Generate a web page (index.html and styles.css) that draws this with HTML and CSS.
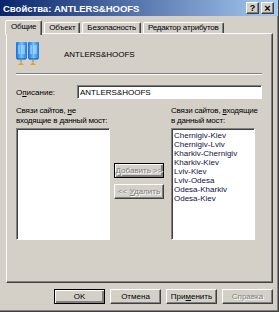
FILE: index.html
```html
<!DOCTYPE html>
<html lang="ru">
<head>
    <meta charset="UTF-8">
    <title>Свойства: ANTLERS&amp;HOOFS</title>
    <link rel="stylesheet" href="styles.css">
</head>
<body>
    <div class="window">
        <div class="titlebar">
            <span class="title">Свойства: ANTLERS&amp;HOOFS</span>
            <div class="caption-buttons">
                <span class="cap-btn">?</span>
                <span class="cap-btn close">×</span>
            </div>
        </div>

        <!-- вкладки -->
        <div class="tabs">
            <span class="tab active">Общие</span>
            <span class="tab">Объект</span>
            <span class="tab">Безопасность</span>
            <span class="tab">Редактор атрибутов</span>
        </div>

        <div class="panel">
            <div class="header">
                <svg class="site-icon" width="25" height="24" viewBox="0 0 25 24">
                    <defs>
                        <linearGradient id="blue" x1="0" y1="0" x2="1" y2="0">
                            <stop offset="0" stop-color="#1a6fd8"/>
                            <stop offset="0.5" stop-color="#6fc4ff"/>
                            <stop offset="1" stop-color="#1f78e0"/>
                        </linearGradient>
                    </defs>
                    <rect x="1" y="0" width="11" height="17" rx="1" fill="url(#blue)"/>
                    <rect x="13" y="0" width="11" height="17" rx="1" fill="url(#blue)"/>
                    <path d="M4 3v9M7 3v9M9 3v9M16 3v9M19 3v9M21 3v9" stroke="#bfe6ff" stroke-width="1"/>
                    <path d="M2 17h9M14 17h9" stroke="#0d4fa8" stroke-width="1"/>
                    <path d="M6 18v2M18 18v2" stroke="#7a7a7a" stroke-width="1"/>
                    <path d="M3 23l3-3 3 3zM15 23l3-3 3 3z" fill="#e8a020"/>
                </svg>
                <span class="site-name">ANTLERS&amp;HOOFS</span>
            </div>
            <div class="separator"></div>

            <div class="desc-row">
                <label for="desc">О<u>п</u>исание:</label>
                <input id="desc" type="text" value="ANTLERS&amp;HOOFS">
            </div>

            <div class="links">
                <div class="list-label">Связи сайтов, <u>н</u>е<br>входящие в данный мост:</div>
                <div></div>
                <div class="list-label">Связи сайтов, <u>в</u>ходящие<br>в данный мост:</div>

                <div class="listbox"></div>
                <div class="move-buttons">
                    <button class="btn default" disabled><u>Д</u>обавить &gt;&gt;</button>
                    <button class="btn" disabled>&lt;&lt; <u>У</u>далить</button>
                </div>
                <div class="listbox">
                    <div class="item">Chernigiv-Kiev</div>
                    <div class="item">Chernigiv-Lviv</div>
                    <div class="item">Kharkiv-Chernigiv</div>
                    <div class="item">Kharkiv-Kiev</div>
                    <div class="item">Lviv-Kiev</div>
                    <div class="item">Lviv-Odesa</div>
                    <div class="item">Odesa-Kharkiv</div>
                    <div class="item">Odesa-Kiev</div>
                </div>
            </div>
        </div>

        <div class="footer">
            <button class="btn dialog default">OK</button>
            <button class="btn dialog">Отмена</button>
            <button class="btn dialog">При<u>м</u>енить</button>
            <button class="btn dialog" disabled>Справка</button>
        </div>
    </div>
</body>
</html>
```

FILE: styles.css
```css
body {
    margin: 0;
    background-color: #d4d0c8;
    font-family: "Liberation Sans", Arial, sans-serif;
    font-size: 8px;
    color: #000;
}
.window {
    width: 279px;
    height: 312px;
    box-sizing: border-box;
    border-right: 1px solid #404040;
    border-bottom: 1px solid #404040;
    box-shadow: inset -1px -1px #808080;
    display: flex;
    flex-direction: column;
}
.titlebar {
    height: 16px;
    background: linear-gradient(to right, #0a246a, #a6caf0);
    color: #fff;
    display: flex;
    align-items: center;
    justify-content: space-between;
    padding: 0 4px 0 3px;
}
.title {
    font-weight: bold;
    font-size: 9.5px;
}
.caption-buttons {
    display: flex;
    gap: 2px;
}
.cap-btn {
    width: 13px;
    height: 12px;
    box-sizing: border-box;
    background-color: #d4d0c8;
    color: #000;
    font-weight: bold;
    font-size: 9px;
    line-height: 10px;
    text-align: center;
    border: 1px solid;
    border-color: #fff #404040 #404040 #fff;
    box-shadow: inset -1px -1px #808080;
}
.cap-btn.close {
    font-size: 11px;
}

/* вкладки */
.tabs {
    display: flex;
    align-items: flex-end;
    margin: 4px 0 0 7px;
    height: 13px;
    position: relative;
    z-index: 1;
}
.tab {
    height: 11px;
    box-sizing: border-box;
    padding: 0 4px;
    line-height: 10px;
    letter-spacing: -0.2px;
    border: 1px solid;
    border-bottom: none;
    border-color: #fff #404040 transparent #fff;
    border-radius: 2px 2px 0 0;
    box-shadow: inset -1px 0 #808080;
    margin-right: 2px;
    white-space: nowrap;
}
.tab.active {
    height: 15px;
    margin-bottom: -2px;
    padding: 0 5px;
    line-height: 12px;
    background-color: #d4d0c8;
    margin-left: -2px;
}
.panel {
    margin-left: 6px;
    width: 267px;
    height: 250px;
    box-sizing: border-box;
    border: 1px solid;
    border-color: #fff #404040 #404040 #fff;
    box-shadow: inset -1px -1px #808080;
    padding: 8px 10px 0 9px;
}
.header {
    display: flex;
    align-items: center;
    height: 23px;
}
.site-icon {
    margin-left: -1px;
}
.site-name {
    margin-left: 24px;
    margin-top: 2px;
}
.separator {
    margin-top: 8px;
    border-top: 1px solid #808080;
    border-bottom: 1px solid #fff;
}
.desc-row {
    display: flex;
    align-items: center;
    justify-content: space-between;
    margin-top: 10px;
}
.desc-row input {
    width: 185px;
    height: 14px;
    box-sizing: border-box;
    border: 1px solid;
    border-color: #808080 #fff #fff #808080;
    box-shadow: inset 1px 1px #404040;
    background-color: #fff;
    font: inherit;
    padding: 0 1px 0 2px;
    outline: none;
}
.links {
    display: grid;
    grid-template-columns: 94px 50px 87px;
    column-gap: 4px;
    margin-top: 7px;
}
.links > :nth-child(3),
.links > :nth-child(6) {
    margin-left: 3px;
}
.list-label {
    line-height: 10px;
    height: 22px;
    white-space: nowrap;
    letter-spacing: -0.2px;
}
.listbox {
    height: 112px;
    box-sizing: border-box;
    border: 1px solid;
    border-color: #808080 #fff #fff #808080;
    box-shadow: inset 1px 1px #404040;
    background-color: #fff;
    padding: 2px 0 0 2px;
}
.item {
    line-height: 9px;
    height: 9px;
    color: #101048;
    white-space: nowrap;
}
.move-buttons {
    display: flex;
    flex-direction: column;
    gap: 6px;
    padding-top: 35px;
}
.btn {
    height: 15px;
    box-sizing: border-box;
    background-color: #d4d0c8;
    font: inherit;
    color: #000;
    padding: 0;
    white-space: nowrap;
    border: 1px solid;
    border-color: #fff #404040 #404040 #fff;
    box-shadow: inset -1px -1px #808080;
}
.btn.default {
    border-color: #000;
    box-shadow: inset 1px 1px #fff, inset -2px -2px #808080;
}
.btn:disabled {
    color: #808080;
    text-shadow: 1px 1px #fff;
}
.footer {
    display: flex;
    justify-content: flex-end;
    gap: 5px;
    margin: 6px 5px 0 0;
}
.btn.dialog {
    width: 51px;
}
```
